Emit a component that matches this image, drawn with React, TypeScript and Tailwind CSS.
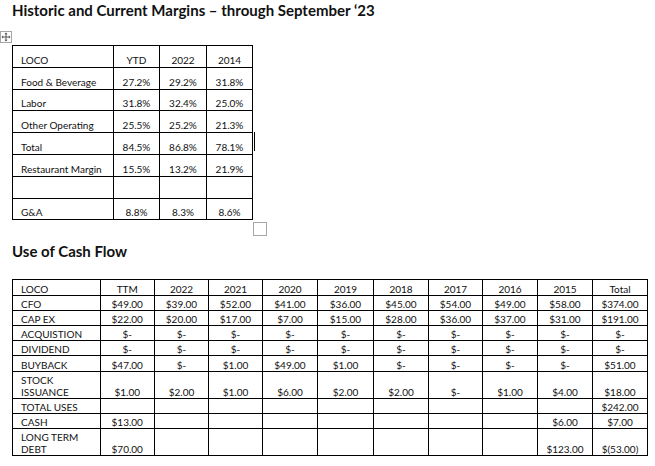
import React from "react";

const margins: string[][] = [
  ["LOCO", "YTD", "2022", "2014"],
  ["Food & Beverage", "27.2%", "29.2%", "31.8%"],
  ["Labor", "31.8%", "32.4%", "25.0%"],
  ["Other Operating", "25.5%", "25.2%", "21.3%"],
  ["Total", "84.5%", "86.8%", "78.1%"],
  ["Restaurant Margin", "15.5%", "13.2%", "21.9%"],
  ["", "", "", ""],
  ["G&A", "8.8%", "8.3%", "8.6%"],
];

const marginCols = ["w-[101px]", "w-[46px]", "w-[47px]", "w-[46px]"];

const D = "$-";
const E = "";

const cashFlow: { label: React.ReactNode; values: string[] }[] = [
  { label: "LOCO", values: ["TTM", "2022", "2021", "2020", "2019", "2018", "2017", "2016", "2015", "Total"] },
  { label: "CFO", values: ["$49.00", "$39.00", "$52.00", "$41.00", "$36.00", "$45.00", "$54.00", "$49.00", "$58.00", "$374.00"] },
  { label: "CAP EX", values: ["$22.00", "$20.00", "$17.00", "$7.00", "$15.00", "$28.00", "$36.00", "$37.00", "$31.00", "$191.00"] },
  { label: "ACQUISTION", values: [D, D, D, D, D, D, D, D, D, D] },
  { label: "DIVIDEND", values: [D, D, D, D, D, D, D, D, D, D] },
  { label: "BUYBACK", values: ["$47.00", D, "$1.00", "$49.00", "$1.00", D, D, D, D, "$51.00"] },
  {
    label: (
      <>
        STOCK
        <br />
        ISSUANCE
      </>
    ),
    values: ["$1.00", "$2.00", "$1.00", "$6.00", "$2.00", "$2.00", D, "$1.00", "$4.00", "$18.00"],
  },
  { label: "TOTAL USES", values: [E, E, E, E, E, E, E, E, E, "$242.00"] },
  { label: "CASH", values: ["$13.00", E, E, E, E, E, E, E, "$6.00", "$7.00"] },
  {
    label: (
      <>
        LONG TERM
        <br />
        DEBT
      </>
    ),
    values: ["$70.00", E, E, E, E, E, E, E, "$123.00", "$(53.00)"],
  },
];

const cashCols = [
  "w-[87.5px]",
  "w-[54.5px]",
  "w-[54px]",
  "w-[54px]",
  "w-[55px]",
  "w-[56px]",
  "w-[55px]",
  "w-[54px]",
  "w-[55px]",
  "w-[55px]",
  "w-[55px]",
];

function MoveHandle() {
  return (
    <svg width="12" height="12" viewBox="0 0 12 12" className="block">
      <rect x="0.5" y="0.5" width="11" height="11" fill="white" stroke="#a6a6a6" />
      <g stroke="#555" strokeWidth="1" fill="none">
        <line x1="6" y1="2" x2="6" y2="10" />
        <line x1="2" y1="6" x2="10" y2="6" />
      </g>
      <g fill="#555">
        <path d="M6 1.5 L4.5 3.2 L7.5 3.2 Z" />
        <path d="M6 10.5 L4.5 8.8 L7.5 8.8 Z" />
        <path d="M1.5 6 L3.2 4.5 L3.2 7.5 Z" />
        <path d="M10.5 6 L8.8 4.5 L8.8 7.5 Z" />
      </g>
    </svg>
  );
}

export default function App() {
  return (
    <div className="w-[655px] h-[466px] overflow-hidden bg-white text-[#111] font-['Lato',sans-serif]">
      {/* Heading 1 */}
      <div className="pl-[12px] pt-px text-[15px] leading-[18px] font-bold whitespace-nowrap">
        Historic and Current Margins – through September ‘23
      </div>

      <div className="mt-[12px]">
        <MoveHandle />
      </div>

      {/* Margins table */}
      <div className="relative ml-[12px] mt-[2px] w-[240px]">
        <table className="table-fixed border-collapse w-[240px] text-[10px]">
          <colgroup>
            {marginCols.map((c, i) => (
              <col key={i} className={c} />
            ))}
          </colgroup>
          <tbody>
            {margins.map((row, r) => (
              <tr key={r}>
                {row.map((cell, c) => (
                  <td
                    key={c}
                    className={
                      "border border-black pt-[7.8px] pb-0 leading-[13px] h-[21.8px] align-top whitespace-nowrap " +
                      (c === 0 ? "pl-[8px] text-left" : "text-center")
                    }
                  >
                    {cell}
                  </td>
                ))}
              </tr>
            ))}
          </tbody>
        </table>
        {/* text cursor */}
        <div className="absolute left-[242px] top-[87px] w-px h-[19px] bg-black" />
      </div>

      {/* table resize handle */}
      <div className="ml-[253px] mt-[1.5px] w-[14px] h-[14px] border border-[#a6a6a6]" />

      {/* Heading 2 */}
      <div className="pl-[12px] mt-[6px] text-[15px] leading-[18px] font-bold">Use of Cash Flow</div>

      {/* Cash flow table */}
      <table className="ml-[12px] mt-[19.5px] table-fixed border-collapse w-[635px] text-[10px]">
        <colgroup>
          {cashCols.map((c, i) => (
            <col key={i} className={c} />
          ))}
        </colgroup>
        <tbody>
          {cashFlow.map((row, r) => (
            <tr key={r}>
              <td className="border border-black pl-[8px] pt-[2.2px] pb-0 leading-[12px] text-left align-bottom whitespace-nowrap">
                {row.label}
              </td>
              {row.values.map((v, c) => (
                <td
                  key={c}
                  className="border border-black pt-[2.2px] pb-0 leading-[12px] text-center align-bottom whitespace-nowrap"
                >
                  {v}
                </td>
              ))}
            </tr>
          ))}
        </tbody>
      </table>
    </div>
  );
}
